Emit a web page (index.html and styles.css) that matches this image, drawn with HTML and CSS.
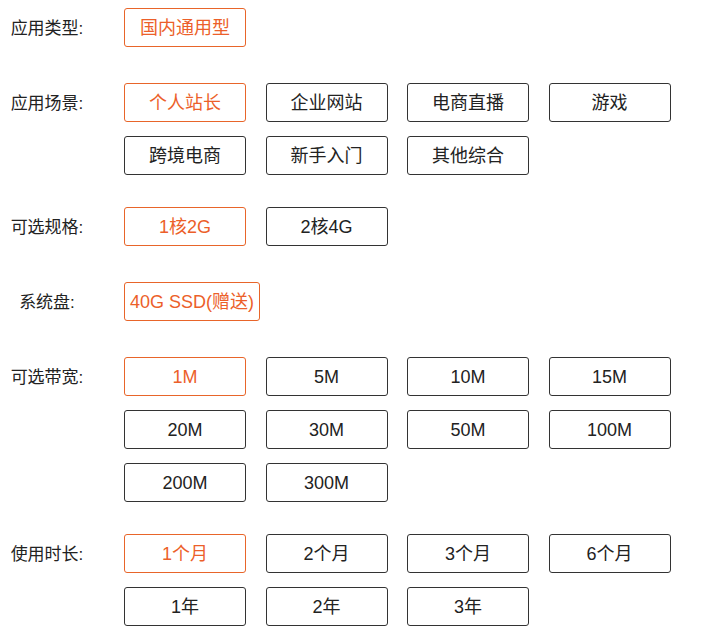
FILE: index.html
```html
<!DOCTYPE html>
<html lang="zh-CN">
<head>
  <meta charset="UTF-8" />
  <meta name="viewport" content="width=device-width, initial-scale=1.0" />
  <title>选择配置</title>
  <link rel="stylesheet" href="styles.css">
</head>
<body>
  <div class="config">
    <div class="config-row">
      <div class="config-label">应用类型:</div>
      <div class="options">
        <span class="option active">国内通用型</span>
      </div>
    </div>

    <div class="config-row">
      <div class="config-label">应用场景:</div>
      <div class="options">
        <span class="option active">个人站长</span>
        <span class="option">企业网站</span>
        <span class="option">电商直播</span>
        <span class="option">游戏</span>
        <span class="option">跨境电商</span>
        <span class="option">新手入门</span>
        <span class="option">其他综合</span>
      </div>
    </div>

    <div class="config-row">
      <div class="config-label">可选规格:</div>
      <div class="options">
        <span class="option active">1核2G</span>
        <span class="option">2核4G</span>
      </div>
    </div>

    <div class="config-row">
      <div class="config-label">系统盘:</div>
      <div class="options">
        <span class="option active option-auto">40G SSD(赠送)</span>
      </div>
    </div>

    <div class="config-row">
      <div class="config-label">可选带宽:</div>
      <div class="options">
        <span class="option active">1M</span>
        <span class="option">5M</span>
        <span class="option">10M</span>
        <span class="option">15M</span>
        <span class="option">20M</span>
        <span class="option">30M</span>
        <span class="option">50M</span>
        <span class="option">100M</span>
        <span class="option">200M</span>
        <span class="option">300M</span>
      </div>
    </div>

    <div class="config-row">
      <div class="config-label">使用时长:</div>
      <div class="options">
        <span class="option active">1个月</span>
        <span class="option">2个月</span>
        <span class="option">3个月</span>
        <span class="option">6个月</span>
        <span class="option">1年</span>
        <span class="option">2年</span>
        <span class="option">3年</span>
      </div>
    </div>
  </div>
</body>
</html>
```

FILE: styles.css
```css
body {
  margin: 0;
  font-family: 'Liberation Sans', 'Noto Sans CJK SC', sans-serif;
  background: #fff;
  color: #333;
}
.config {
  padding: 8px 0 0;
}
.config-row {
  display: flex;
  align-items: flex-start;
  min-height: 75px;
  padding-bottom: 32px;
  box-sizing: border-box;
}
.config-label {
  width: 94px;
  margin-right: 30px;
  padding-top: 1px;
  text-align: center;
  font-size: 17px;
  line-height: 39px;
  color: #222;
}
.options {
  display: grid;
  grid-template-columns: repeat(4, 122px);
  column-gap: 19.5px;
  row-gap: 14px;
}
.option {
  display: block;
  height: 39px;
  padding-top: 2px;
  line-height: 35px;
  box-sizing: border-box;
  border: 1px solid #333;
  border-radius: 3px;
  text-align: center;
  font-size: 18px;
  color: #222;
  cursor: pointer;
}
.option.active {
  border-color: #e8652a;
  color: #ec5f2a;
}
.option-auto {
  width: 136px;
}
```
